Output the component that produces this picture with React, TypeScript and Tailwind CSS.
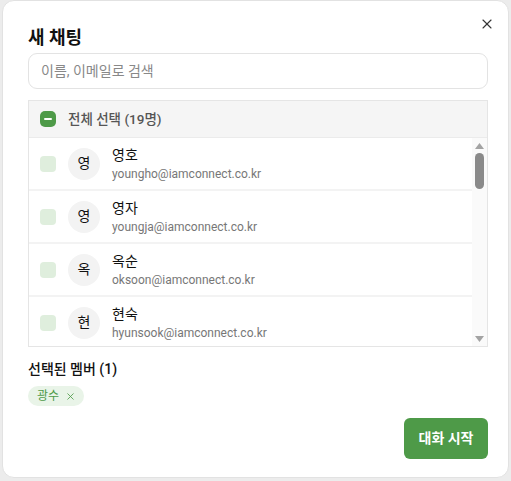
import { X } from 'lucide-react';

interface Member {
  name: string;
  email: string;
}

const members: Member[] = [
  { name: '영호', email: 'youngho@iamconnect.co.kr' },
  { name: '영자', email: 'youngja@iamconnect.co.kr' },
  { name: '옥순', email: 'oksoon@iamconnect.co.kr' },
  { name: '현숙', email: 'hyunsook@iamconnect.co.kr' },
  { name: '영숙', email: 'youngsook@iamconnect.co.kr' },
];

export default function App() {
  return (
    <div
      className="w-[511px] h-[481px] bg-[#ececec] pl-[2px] pr-[2px] pb-[3px]"
      style={{ fontFamily: 'Roboto, "Noto Sans CJK KR", sans-serif' }}
    >
      <div className="relative h-full bg-white rounded-[12px] border border-[#e2e2e2] pl-[25px] pr-[20px] pt-[24px] flex flex-col">
        <button className="absolute right-[13px] top-[15px] text-[#333]">
          <X size={16} strokeWidth={1.6} />
        </button>

        <h2 className="text-[18px] font-bold text-[#111] leading-[26px]">새 채팅</h2>

        <div className="mt-[2px] h-[36px] rounded-[9px] border border-[#e3e3e3] flex items-center px-[12px]">
          <span className="text-[14px] text-[#888]">이름, 이메일로 검색</span>
        </div>

        <div className="mt-[11px] border border-[#e5e5e5]">
          <div className="h-[37px] bg-[#f5f5f5] border-b border-[#ebebeb] flex items-center px-[11px] gap-[12px]">
            <div className="w-[16px] h-[16px] rounded-[5px] bg-[#4e9a48] flex items-center justify-center">
              <div className="w-[8px] h-[2px] bg-white rounded" />
            </div>
            <span className="text-[13.5px] font-medium text-[#555]">전체 선택 (19명)</span>
          </div>
          <div className="h-[208px] flex">
            <div className="flex-1 overflow-hidden">
              {members.map((m) => (
                <div
                  key={m.email}
                  className="h-[53px] border-b-2 border-[#f3f3f3] flex items-center px-[11px]"
                >
                  <div className="w-[16px] h-[16px] rounded-[4px] bg-[#dfeedd]" />
                  <div className="ml-[12px] w-[32px] h-[32px] rounded-full bg-[#f3f3f3] flex items-center justify-center text-[14px] text-[#111]">
                    {m.name[0]}
                  </div>
                  <div className="ml-[12px] flex flex-col">
                    <span className="text-[14px] text-[#111] leading-[20px]">{m.name}</span>
                    <span className="text-[12px] text-[#777] leading-[18px]">{m.email}</span>
                  </div>
                </div>
              ))}
            </div>
            <div className="w-[15px] bg-[#fafafa] flex flex-col items-center pt-[5px] pb-[4px]">
              <svg width="9" height="6" viewBox="0 0 9 6">
                <path d="M4.5 0L9 6H0z" fill="#a3a3a3" />
              </svg>
              <div className="mt-[4px] w-[9px] h-[36px] rounded-full bg-[#8a8a8a]" />
              <div className="flex-1" />
              <svg width="9" height="6" viewBox="0 0 9 6">
                <path d="M0 0H9L4.5 6z" fill="#a3a3a3" />
              </svg>
            </div>
          </div>
        </div>

        <div className="mt-[12px] text-[14px] font-medium text-[#111] leading-[20px]">선택된 멤버 (1)</div>
        <div className="mt-[7px] flex">
          <span className="h-[20px] pl-[9px] pr-[8px] rounded-full bg-[#e9f4e8] text-[#4e9a48] text-[12px] flex items-center gap-[6px]">
            광수 <X size={11} strokeWidth={1.8} />
          </span>
        </div>

        <div className="mt-[12px] flex justify-end">
          <button className="w-[84px] h-[41px] rounded-[6px] bg-[#4e9a48] text-white text-[14px] font-bold">
            대화 시작
          </button>
        </div>
      </div>
    </div>
  );
}
